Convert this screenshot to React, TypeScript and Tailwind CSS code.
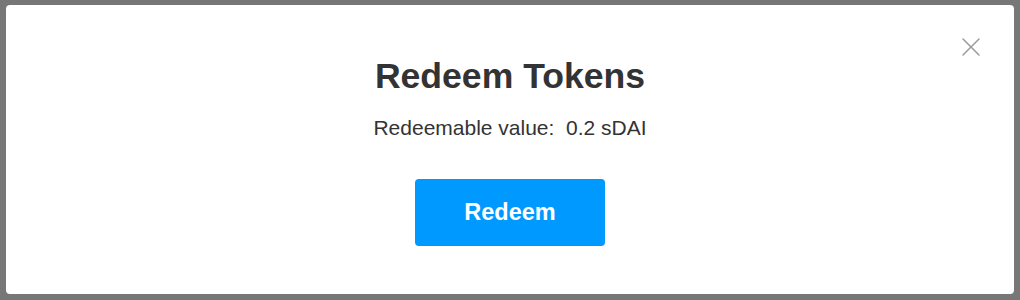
import { X } from 'lucide-react'

export default function App() {
  return (
    <div className="h-[300px] w-full bg-[#777777] pt-[5px] px-[6px] pb-[6px] font-['Liberation_Sans',Arial,sans-serif]">
      <div className="relative h-full rounded-[4px] bg-white">
        {/* Close */}
        <button className="absolute right-[27px] top-[26px] text-[#999999] hover:text-[#666666]">
          <X size={32} strokeWidth={1.1} />
        </button>

        <div className="flex flex-col items-center pt-[51px]">
          <h2 className="text-[35.6px] leading-[40px] font-bold text-[#333333]">
            Redeem Tokens
          </h2>
          <p className="mt-[20px] text-[21px] leading-[24px] text-[#333333] whitespace-pre">
            Redeemable value:  0.2 sDAI
          </p>
          <button className="mt-[39px] h-[67px] w-[190px] rounded-[4px] bg-[#0099ff] text-[23.5px] font-bold text-white">
            Redeem
          </button>
        </div>
      </div>
    </div>
  )
}
